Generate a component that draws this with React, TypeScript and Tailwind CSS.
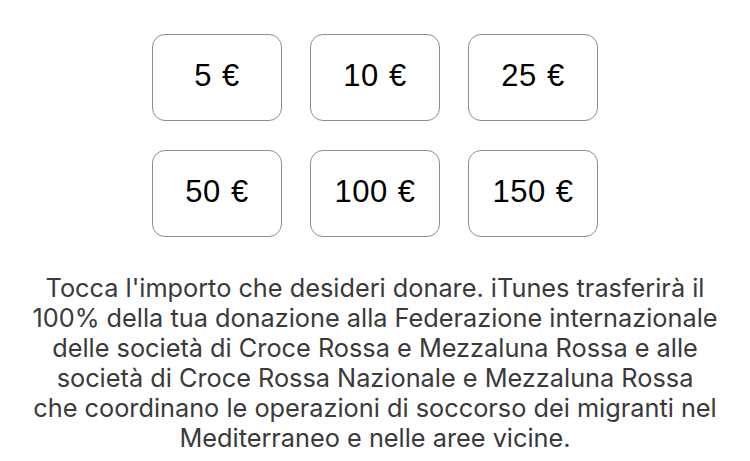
export default function App() {
  const amounts = ["5 €", "10 €", "25 €", "50 €", "100 €", "150 €"];

  return (
    <div className="w-[750px] h-[461px] bg-white flex flex-col items-center pt-[34px] overflow-hidden">
      {/* AMOUNT GRID */}
      <div className="grid grid-cols-3 gap-x-[28px] gap-y-[29px]">
        {amounts.map((a) => (
          <button
            key={a}
            className="w-[130px] h-[87px] rounded-[13px] border border-[#8e8e8e] bg-white flex items-center justify-center pb-[3px] text-[31px] tracking-[0.5px] [word-spacing:1px] text-black font-['Liberation_Sans',sans-serif]"
          >
            {a}
          </button>
        ))}
      </div>

      {/* DESCRIPTION */}
      <p className="mt-[36px] w-[720px] text-center text-[25.3px] leading-[30px] text-[#3a3a3a] font-['Inter',sans-serif]">
        Tocca l'importo che desideri donare. iTunes trasferirà il
        <br />
        100% della tua donazione alla Federazione internazionale
        <br />
        delle società di Croce Rossa e Mezzaluna Rossa e alle
        <br />
        società di Croce Rossa Nazionale e Mezzaluna Rossa
        <br />
        che coordinano le operazioni di soccorso dei migranti nel
        <br />
        Mediterraneo e nelle aree vicine.
      </p>
    </div>
  );
}
